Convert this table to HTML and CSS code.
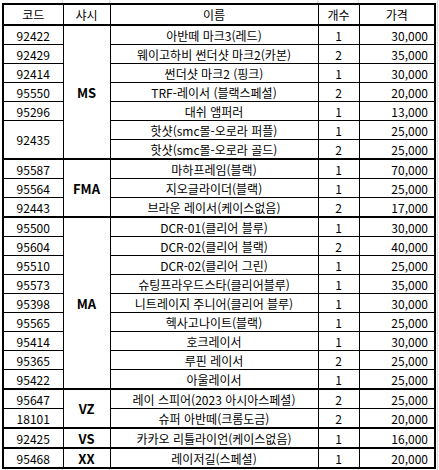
FILE: index.html
```html
<!DOCTYPE html>
<html lang="ko">
<head>
<meta charset="utf-8">
<link rel="stylesheet" href="styles.css">
</head>
<body>
<table class="sheet">
  <colgroup>
    <col class="c-code"><col class="c-ch"><col class="c-name"><col class="c-qty"><col class="c-price">
  </colgroup>
  <thead>
    <tr><th>코드</th><th>샤시</th><th>이름</th><th>개수</th><th>가격</th></tr>
  </thead>
  <tbody>
    <tr><td>92422</td><td class="ch" rowspan="7">MS</td><td>아반떼 마크3(레드)</td><td>1</td><td class="price">30,000</td></tr>
    <tr><td>92429</td><td>웨이고하비 썬더샷 마크2(카본)</td><td>2</td><td class="price">35,000</td></tr>
    <tr><td>92414</td><td>썬더샷 마크2 (핑크)</td><td>1</td><td class="price">30,000</td></tr>
    <tr><td>95550</td><td>TRF-레이서 (블랙스페셜)</td><td>2</td><td class="price">20,000</td></tr>
    <tr><td>95296</td><td>대쉬 앰퍼러</td><td>1</td><td class="price">13,000</td></tr>
    <tr><td rowspan="2">92435</td><td>핫샷(smc몰-오로라 퍼플)</td><td>1</td><td class="price">25,000</td></tr>
    <tr><td>핫샷(smc몰-오로라 골드)</td><td>2</td><td class="price">25,000</td></tr>
  </tbody>
  <tbody>
    <tr><td>95587</td><td class="ch" rowspan="3">FMA</td><td>마하프레임(블랙)</td><td>1</td><td class="price">70,000</td></tr>
    <tr><td>95564</td><td>지오글라이더(블랙)</td><td>1</td><td class="price">25,000</td></tr>
    <tr><td>92443</td><td>브라운 레이서(케이스없음)</td><td>2</td><td class="price">17,000</td></tr>
  </tbody>
  <tbody>
    <tr><td>95500</td><td class="ch" rowspan="9">MA</td><td>DCR-01(클리어 블루)</td><td>1</td><td class="price">30,000</td></tr>
    <tr><td>95604</td><td>DCR-02(클리어 블랙)</td><td>2</td><td class="price">40,000</td></tr>
    <tr><td>95510</td><td>DCR-02(클리어 그린)</td><td>1</td><td class="price">25,000</td></tr>
    <tr><td>95573</td><td>슈팅프라우드스타(클리어블루)</td><td>1</td><td class="price">35,000</td></tr>
    <tr><td>95398</td><td>니트레이지 주니어(클리어 블루)</td><td>1</td><td class="price">30,000</td></tr>
    <tr><td>95565</td><td>헥사고나이트(블랙)</td><td>1</td><td class="price">25,000</td></tr>
    <tr><td>95414</td><td>호크레이서</td><td>1</td><td class="price">30,000</td></tr>
    <tr><td>95365</td><td>루핀 레이서</td><td>2</td><td class="price">25,000</td></tr>
    <tr><td>95422</td><td>아울레이서</td><td>1</td><td class="price">25,000</td></tr>
  </tbody>
  <tbody>
    <tr><td>95647</td><td class="ch" rowspan="2">VZ</td><td>레이 스피어(2023 아시아스페셜)</td><td>2</td><td class="price">25,000</td></tr>
    <tr><td>18101</td><td>슈퍼 아반떼(크롬도금)</td><td>2</td><td class="price">20,000</td></tr>
  </tbody>
  <tbody>
    <tr><td>92425</td><td class="ch">VS</td><td>카카오 리틀라이언(케이스없음)</td><td>1</td><td class="price">16,000</td></tr>
  </tbody>
  <tbody>
    <tr><td>95468</td><td class="ch">XX</td><td>레이저길(스페셜)</td><td>1</td><td class="price">20,000</td></tr>
  </tbody>
</table>
</body>
</html>
```
FILE: styles.css
```css
html, body {
  margin: 0;
  background-color: #ffffff;
}
body {
  padding: 3px 0 0 2px;
  font-family: "Noto Sans CJK KR", "Noto Sans", sans-serif;
  font-size: 12px;
  color: #000;
  background-image:
    linear-gradient(#dcdcdc, #dcdcdc),
    linear-gradient(#dcdcdc, #dcdcdc),
    linear-gradient(#dcdcdc, #dcdcdc),
    linear-gradient(#dcdcdc, #dcdcdc),
    linear-gradient(#dcdcdc, #dcdcdc);
  background-size: 1px 100%;
  background-repeat: no-repeat;
  background-position: 62px 0, 109px 0, 317px 0, 358px 0, 437px 0;
  min-height: 470px;
  box-sizing: border-box;
}
.sheet {
  border-collapse: collapse;
  table-layout: fixed;
  width: 432px;
  border: 2px solid #000;
  background: #fff;
}
.c-code { width: 60px; }
.c-ch { width: 47px; }
.c-name { width: 208px; }
.c-qty { width: 41px; }
.c-price { width: 76px; }
.sheet th,
.sheet td {
  border: 1px solid #000;
  height: 18px;
  padding: 0 2px;
  line-height: 17px;
  text-align: center;
  font-weight: 400;
  white-space: nowrap;
  overflow: hidden;
}
.sheet th {
  height: 19px;
}
.sheet thead,
.sheet tbody {
  border-bottom: 2px solid #000;
}
.sheet .ch {
  font-weight: 700;
  font-size: 13px;
}
.sheet .price {
  text-align: right;
  padding-right: 6px;
}
```
